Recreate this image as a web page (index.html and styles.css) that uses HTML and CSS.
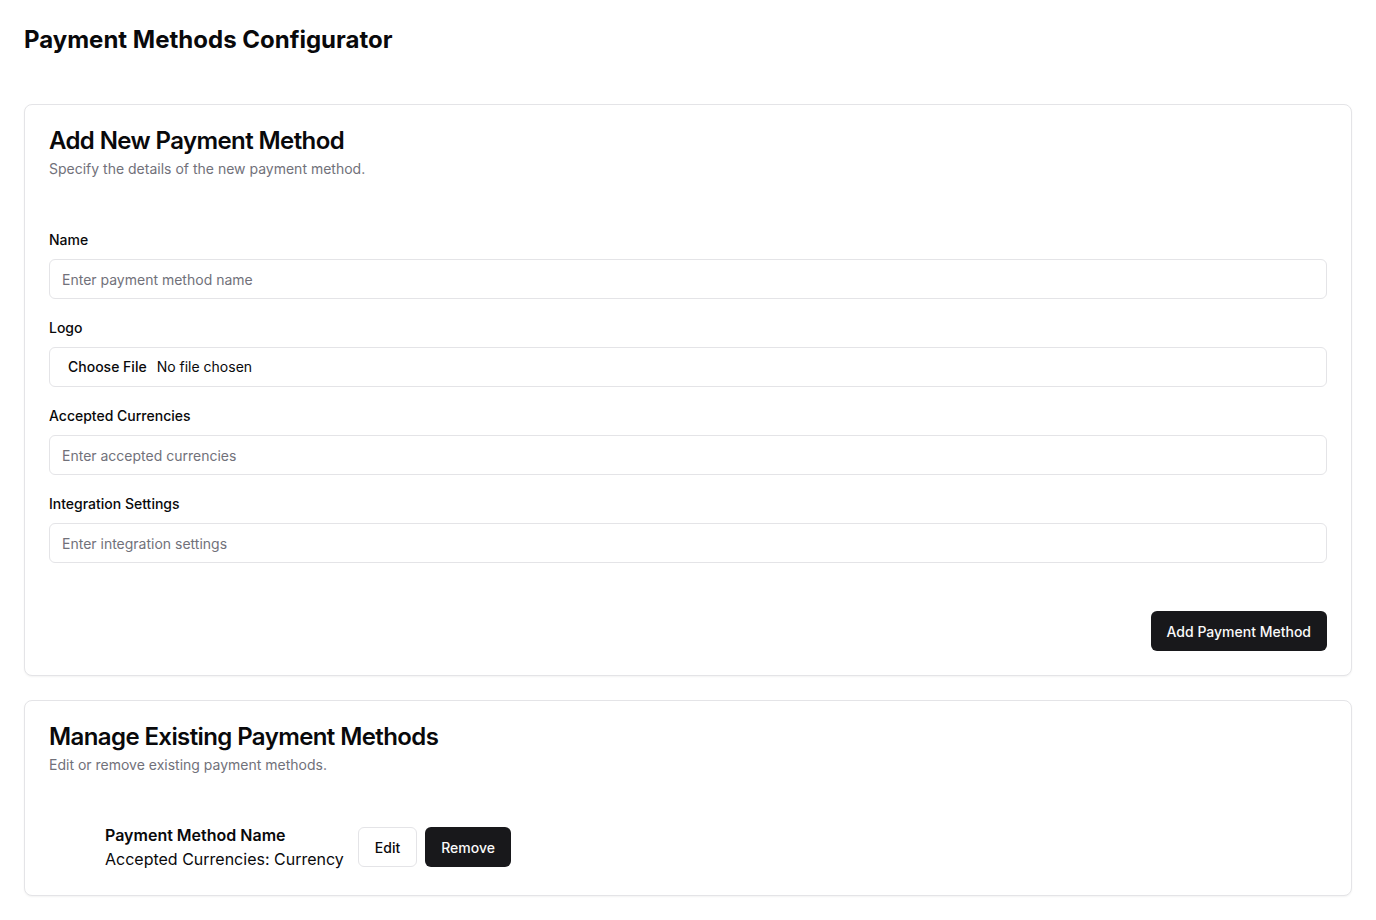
FILE: index.html
```html
<!DOCTYPE html>
<html lang="en">
<head>
<meta charset="utf-8">
<title>Payment Methods Configurator</title>
<link rel="stylesheet" href="styles.css">
</head>
<body>
<main class="page">
  <h1 class="page-title">Payment Methods Configurator</h1>

  <section class="card">
    <div class="card-header">
      <h2 class="card-title">Add New Payment Method</h2>
      <p class="card-desc">Specify the details of the new payment method.</p>
    </div>
    <form class="card-content form">
      <div class="field">
        <label class="label" for="name">Name</label>
        <input class="input" id="name" type="text" placeholder="Enter payment method name">
      </div>
      <div class="field">
        <label class="label" for="logo">Logo</label>
        <input class="input file" id="logo" type="file">
      </div>
      <div class="field">
        <label class="label" for="cur">Accepted Currencies</label>
        <input class="input" id="cur" type="text" placeholder="Enter accepted currencies">
      </div>
      <div class="field">
        <label class="label" for="int">Integration Settings</label>
        <input class="input" id="int" type="text" placeholder="Enter integration settings">
      </div>
    </form>
    <div class="card-footer">
      <button class="btn btn-dark" type="button">Add Payment Method</button>
    </div>
  </section>

  <section class="card">
    <div class="card-header">
      <h2 class="card-title">Manage Existing Payment Methods</h2>
      <p class="card-desc">Edit or remove existing payment methods.</p>
    </div>
    <div class="card-content list">
      <div class="method">
        <div class="method-info">
          <div class="method-name">Payment Method Name</div>
          <div class="method-cur">Accepted Currencies: Currency</div>
        </div>
        <div class="method-actions">
          <button class="btn btn-outline" type="button">Edit</button>
          <button class="btn btn-dark" type="button">Remove</button>
        </div>
      </div>
    </div>
  </section>
</main>
</body>
</html>
```

FILE: styles.css
```css
* { box-sizing: border-box; }
html, body { margin: 0; background: #ffffff; }
body {
  font-family: Inter, "Noto Sans", "Liberation Sans", sans-serif;
  color: #09090b;
}
.page { padding: 24px; }
.page-title {
  margin: 0 0 48px;
  font-size: 24px;
  line-height: 32px;
  font-weight: 700;
}
.card {
  background: #fff;
  border: 1px solid #e4e4e7;
  border-radius: 8px;
  box-shadow: 0 1px 2px rgba(0,0,0,0.05);
  margin-bottom: 24px;
}
.card-header {
  padding: 24px;
  display: flex;
  flex-direction: column;
  gap: 6px;
}
.card-title {
  margin: 0;
  font-size: 24px;
  line-height: 24px;
  font-weight: 600;
  letter-spacing: -0.6px;
}
.card-desc {
  margin: 0;
  font-size: 14px;
  line-height: 20px;
  color: #71717a;
}
.card-content { padding: 0 24px 24px; }
.form {
  padding-top: 27px;
  display: flex;
  flex-direction: column;
  gap: 19px;
}
.field { display: flex; flex-direction: column; }
.label {
  font-size: 14px;
  line-height: 20px;
  font-weight: 500;
  margin-bottom: 9px;
}
.input {
  height: 40px;
  width: 100%;
  border: 1px solid #e4e4e7;
  border-radius: 6px;
  padding: 8px 12px;
  font-family: inherit;
  font-size: 14px;
  color: #09090b;
  background: #fff;
  outline: none;
}
.input::placeholder { color: #71717a; }
.input.file { padding: 8px 12px; line-height: 22px; }
.input.file::file-selector-button {
  border: 0;
  background: transparent;
  font-family: inherit;
  font-size: 14px;
  font-weight: 500;
  color: #09090b;
  padding: 0 6px;
  margin-right: 4px;
}
.card-footer {
  padding: 24px;
  display: flex;
  justify-content: flex-end;
}
.btn {
  height: 40px;
  padding: 0 16px;
  border-radius: 6px;
  font-family: inherit;
  font-size: 14px;
  font-weight: 500;
  cursor: pointer;
}
.btn-dark { background: #18181b; color: #fafafa; border: 0; }
.btn-outline { background: #fff; color: #09090b; border: 1px solid #e4e4e7; }
.list { padding-top: 24px; }
.method {
  display: flex;
  align-items: center;
  gap: 14px;
  padding-left: 56px;
}
.method-info { font-size: 16px; line-height: 24px; }
.method-name { font-weight: 600; }
.method-actions { display: flex; gap: 8px; }
```
